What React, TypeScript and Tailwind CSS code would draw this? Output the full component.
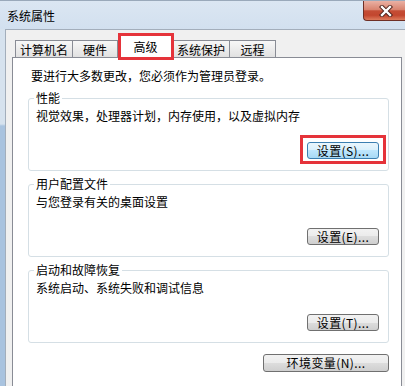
import React from 'react';

type Tab = { label: string; width: string; active?: boolean };

const tabs: Tab[] = [
  { label: '计算机名', width: 'w-[58px]' },
  { label: '硬件', width: 'w-[45px]' },
  { label: '高级', width: 'w-[55px]', active: true },
  { label: '系统保护', width: 'w-[57px]' },
  { label: '远程', width: 'w-[46px]' },
];

type Group = { title: string; desc: string; button: string; hot?: boolean };

const groups: Group[] = [
  { title: '性能', desc: '视觉效果，处理器计划，内存使用，以及虚拟内存', button: '设置(S)...', hot: true },
  { title: '用户配置文件', desc: '与您登录有关的桌面设置', button: '设置(E)...' },
  { title: '启动和故障恢复', desc: '系统启动、系统失败和调试信息', button: '设置(T)...' },
];

function WinButton({ label, hot, className }: { label: string; hot?: boolean; className: string }) {
  const skin = hot
    ? 'border-[#3c7fb1] bg-[linear-gradient(to_bottom,#eaf6fd_0%,#d9f0fc_50%,#bee6fd_50%,#a7d9f5_100%)]'
    : 'border-[#707070] bg-[linear-gradient(to_bottom,#f2f2f2_0%,#ebebeb_50%,#dddddd_50%,#cfcfcf_100%)]';
  return (
    <button
      className={`${className} ${skin} flex items-center justify-center border rounded-[3px] text-[12px] leading-[14px] tracking-[0.4px] text-black`}
    >
      {label}
    </button>
  );
}

function CloseButton() {
  return (
    <div className="w-[42px] h-[20px] flex items-center justify-center rounded-bl-[4px] border-l border-b border-[#6e2f25] bg-[linear-gradient(to_bottom,#eab1a4_0%,#d98470_45%,#c44d35_52%,#c2462e_75%,#dd7b5c_100%)]">
      <svg width="14" height="12" viewBox="0 0 14 12" className="ml-[2px]">
        <path d="M3 2 L11 10 M11 2 L3 10" stroke="#4a1f18" strokeWidth="4.2" strokeLinecap="square" />
        <path d="M3 2 L11 10 M11 2 L3 10" stroke="#ffffff" strokeWidth="2.4" strokeLinecap="square" />
      </svg>
    </div>
  );
}

export default function App() {
  return (
    <div className="w-[405px] h-[386px] overflow-hidden flex flex-col bg-[#d5e2f0] font-['Noto_Sans_CJK_SC','Noto_Sans',sans-serif] text-black">
      {/* title bar */}
      <div className="h-[29px] shrink-0 flex justify-between items-start border-t border-[#9aa9ba] bg-[linear-gradient(to_bottom,#dbe6f2,#d2e0ef)]">
        <span className="pl-[7px] pt-[8px] text-[12px] leading-[14px]">系统属性</span>
        <CloseButton />
      </div>

      <div className="flex flex-1 min-h-0">
        <div className="w-[5px] shrink-0 bg-[linear-gradient(to_bottom,#d6e2ee_0px,#d6e2ee_95px,#a9c3df_97px,#a9c3df_100%)]" />

        {/* client area */}
        <div className="flex-1 flex flex-col border-l border-t border-[#a3aebb] bg-[#f0f0f0] pl-[6px] pr-[3px] pt-[5px]">
          {/* tab strip */}
          <div className="h-[23px] -mb-[1px] flex items-end pl-[3px] shrink-0">
            {tabs.map((t, i) =>
              t.active ? (
                <div
                  key={t.label}
                  className={`${t.width} relative z-10 h-[23px] bg-white border-l border-t border-r border-[#898c95] text-center text-[12px] leading-[14px] pt-[4px]`}
                >
                  {t.label}
                  <div className="absolute -left-[1px] -right-[2px] -top-[3px] -bottom-[2px] border-[3px] border-[#e5333a] pointer-events-none" />
                </div>
              ) : (
                <div
                  key={t.label}
                  className={`${t.width} h-[17px] mb-[1px] border-t border-r ${i === 0 ? 'border-l' : ''} border-[#898c95] bg-[linear-gradient(to_bottom,#f7f7f7,#e1e1e1)] text-center text-[12px] leading-[14px] pt-[2px]`}
                >
                  {t.label}
                </div>
              )
            )}
          </div>

          {/* panel */}
          <div className="flex-1 flex flex-col bg-white border border-[#898c95] pl-[15px] pr-[12px] pt-[11px] min-h-[340px]">
            <p className="pl-[3px] text-[12px] leading-[14px]">要进行大多数更改，您必须作为管理员登录。</p>

            {groups.map((g, i) => (
              <fieldset
                key={g.title}
                className={`${i === 0 ? 'mt-[8px]' : 'mt-[6px]'} flex flex-col border border-[#d5dfe5] rounded-[3px]`}
              >
                <legend className="ml-[5px] px-[2px] text-[12px] leading-[14px]">{g.title}</legend>
                <p className="pl-[7px] pt-[4px] text-[12px] leading-[14px]">{g.desc}</p>
                <div className="flex justify-end pr-[9px] pt-[19px] pb-[11px]">
                  <div className="relative">
                    <WinButton label={g.button} hot={g.hot} className="w-[72px] h-[17px]" />
                    {g.hot && (
                      <div className="absolute -left-[7px] -right-[7px] -top-[7px] -bottom-[5px] border-[3px] border-[#e5333a] pointer-events-none" />
                    )}
                  </div>
                </div>
              </fieldset>
            ))}

            <WinButton label="环境变量(N)..." className="self-end mt-[11px] w-[126px] h-[18px] shrink-0" />
          </div>
        </div>
      </div>
    </div>
  );
}
